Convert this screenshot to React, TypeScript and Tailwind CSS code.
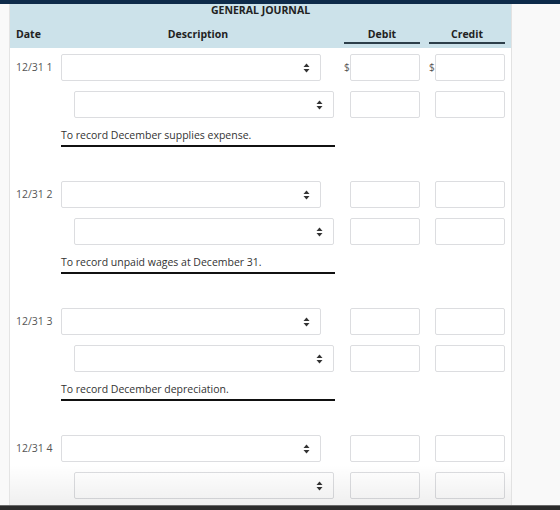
import React from 'react';

const entries = [
  { label: '12/31 1', memo: 'To record December supplies expense.', dollar: true },
  { label: '12/31 2', memo: 'To record unpaid wages at December 31.', dollar: false },
  { label: '12/31 3', memo: 'To record December depreciation.', dollar: false },
  { label: '12/31 4', memo: '', dollar: false },
];

function UpDown() {
  return (
    <svg width="7" height="10" viewBox="0 0 7 10" className="shrink-0">
      <path d="M3.5 0.5 L6.5 4 L0.5 4 Z" fill="#333" />
      <path d="M3.5 9.5 L6.5 6 L0.5 6 Z" fill="#333" />
    </svg>
  );
}

function SelectBox({ indent }: { indent?: boolean }) {
  return (
    <div
      className={
        'flex h-[27px] w-[260px] items-center justify-end rounded-[2px] border border-[#dcdde0] bg-white pr-[10px] ' +
        (indent ? 'ml-[13px]' : '')
      }
    >
      <UpDown />
    </div>
  );
}

function AmountCell({ dollar }: { dollar?: boolean }) {
  return (
    <div className="flex w-[76px] items-center">
      <span className="w-[6px] text-[10px] text-[#555]">{dollar ? '$' : ''}</span>
      <div className="h-[27px] w-[70px] rounded-[2px] border border-[#dcdde0] bg-white" />
    </div>
  );
}

function Entry({ label, memo, dollar }: { label: string; memo: string; dollar: boolean }) {
  return (
    <div className="mb-[34px]">
      <div className="flex items-center">
        <div className="w-[51px] pl-[6px] text-[10.5px] text-[#555]">{label}</div>
        <div className="w-[274px]">
          <SelectBox />
        </div>
        <div className="ml-[9px]">
          <AmountCell dollar={dollar} />
        </div>
        <div className="ml-[9px]">
          <AmountCell dollar={dollar} />
        </div>
      </div>
      <div className="mt-[10px] flex items-center">
        <div className="w-[51px]" />
        <div className="w-[274px]">
          <SelectBox indent />
        </div>
        <div className="ml-[9px]">
          <AmountCell />
        </div>
        <div className="ml-[9px]">
          <AmountCell />
        </div>
      </div>
      {memo && (
        <div className="ml-[51px] mt-[9px] w-[274px] border-b-2 border-[#111] pb-[2px] text-[10.5px] leading-[16px] text-[#333]">
          {memo}
        </div>
      )}
    </div>
  );
}

export default function App() {
  return (
    <div
      className="relative flex h-[510px] w-[560px] flex-col overflow-hidden bg-[#f9f9f9]"
      style={{ fontFamily: '"Open Sans", "Noto Sans", sans-serif' }}
    >
      <div className="h-[4px] bg-[#0e2b4a]" />
      <div className="flex min-h-0 flex-1">
        <div className="w-[10px] border-r border-[#e4e4e4]" />
        <div className="relative w-[501px] overflow-hidden bg-white">
          <div className="bg-[#cce2ea] pb-[4px]">
            <div className="text-center text-[10.5px] font-bold leading-[12px] text-[#222]">
              GENERAL JOURNAL
            </div>
            <div className="mt-[11px] flex items-end text-[10.5px] font-bold leading-[14px] text-[#222]">
              <div className="w-[51px] pb-[3px] pl-[6px]">Date</div>
              <div className="w-[274px] pb-[3px] text-center">Description</div>
              <div className="ml-[9px] w-[76px] border-b-2 border-[#2d3f4a] pb-px text-center">
                Debit
              </div>
              <div className="ml-[9px] w-[76px] border-b-2 border-[#2d3f4a] pb-px text-center">
                Credit
              </div>
            </div>
          </div>
          <div className="pt-[6px]">
            {entries.map((e) => (
              <Entry key={e.label} {...e} />
            ))}
          </div>
          <div className="pointer-events-none absolute bottom-0 left-0 right-0 h-[40px] bg-gradient-to-b from-transparent to-[#00000010]" />
        </div>
        <div className="w-px bg-[#e2e2e2]" />
      </div>
      <div className="h-px bg-[#6a6a6a]" />
      <div className="h-[4px] bg-[#2c2c2c]" />
    </div>
  );
}
